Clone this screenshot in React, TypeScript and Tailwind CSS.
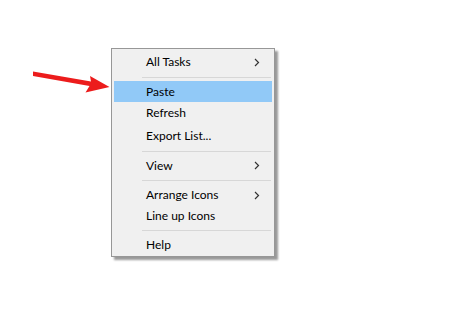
import React from "react";

type Item =
  | { kind: "item"; label: string; h: number; sub?: boolean; active?: boolean }
  | { kind: "sep"; mt: number; mb: number };

const items: Item[] = [
  { kind: "item", label: "All Tasks", h: 22, sub: true },
  { kind: "sep", mt: 4, mb: 3 },
  { kind: "item", label: "Paste", h: 21, active: true },
  { kind: "item", label: "Refresh", h: 22 },
  { kind: "item", label: "Export List...", h: 23 },
  { kind: "sep", mt: 4, mb: 3 },
  { kind: "item", label: "View", h: 21, sub: true },
  { kind: "sep", mt: 4, mb: 3 },
  { kind: "item", label: "Arrange Icons", h: 22, sub: true },
  { kind: "item", label: "Line up Icons", h: 20 },
  { kind: "sep", mt: 4, mb: 3 },
  { kind: "item", label: "Help", h: 21 },
];

function Chevron() {
  return (
    <svg width="6" height="9" viewBox="0 0 6 9" className="absolute right-[12px]">
      <polyline points="1,1 4.5,4.5 1,8" fill="none" stroke="#333" strokeWidth="1.2" />
    </svg>
  );
}

export default function App() {
  return (
    <div className="relative w-[451px] h-[317px] bg-white overflow-hidden" style={{ fontFamily: "Lato, 'Noto Sans', sans-serif" }}>
      <svg className="absolute left-0 top-0" width="451" height="317" viewBox="0 0 451 317">
        <polygon points="33,71.5 91,81.5 90,76 109.5,87 85.5,92.5 89.5,86 33,76" fill="#ec1c1c" />
      </svg>
      <div className="absolute left-[111px] top-[48px] w-[164px] bg-[#f0f0f0] border border-[#979797] pt-[2px] pb-[1px] shadow-[3px_3px_2px_rgba(0,0,0,0.4)]">
        {items.map((it, i) =>
          it.kind === "sep" ? (
            <div key={i} style={{ marginTop: it.mt, marginBottom: it.mb }} className="ml-[30px] mr-[3px] h-px bg-[#d7d7d7]" />
          ) : (
            <div
              key={i}
              style={{ height: it.h }}
              className={`relative mx-[2px] flex items-center pl-[32px] text-[12px] text-black ${it.active ? "bg-[#91c9f7]" : ""}`}
            >
              <span className="leading-none">{it.label}</span>
              {it.sub && <Chevron />}
            </div>
          )
        )}
      </div>
    </div>
  );
}
